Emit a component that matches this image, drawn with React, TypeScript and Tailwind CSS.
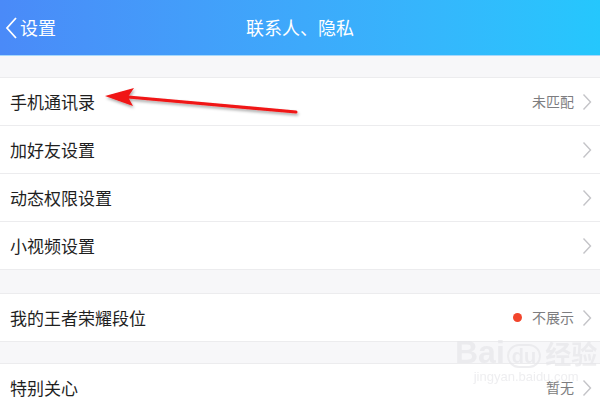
const font = { fontFamily: '"Noto Sans CJK SC", "Noto Sans", sans-serif' };

function Chevron() {
  return (
    <svg width="10" height="18" viewBox="0 0 10 18" className="ml-[8px] shrink-0">
      <path d="M1.5 1.5 L8.5 9 L1.5 16.5" fill="none" stroke="#c4c4c8" strokeWidth="1.4" />
    </svg>
  );
}

function Row({ label, value, dot }: { label: string; value?: string; dot?: boolean }) {
  return (
    <div className="flex h-[48px] items-center border-b border-[#ececee] bg-white pl-[10px] pr-[8px]">
      <span className="flex-1 text-[17px] text-[#1f1f1f]">{label}</span>
      {dot && <span className="mr-[10px] h-[9px] w-[9px] rounded-full bg-[#f2452c]" />}
      {value && <span className="text-[14px] text-[#7d7d80]">{value}</span>}
      <Chevron />
    </div>
  );
}

function Gap({ h }: { h: string }) {
  return <div className={`${h} border-b border-[#ececee] bg-[#f7f7f9]`} />;
}

export default function App() {
  return (
    <div className="relative h-[400px] w-[600px] overflow-hidden bg-[#f7f7f9]" style={font}>
      <div className="flex h-[56px] items-center border-b border-[#a6d8fb] bg-gradient-to-r from-[#4a8af8] to-[#25c7fd] text-white">
        <div className="flex w-[120px] items-center pl-[4px]">
          <svg width="14" height="24" viewBox="0 0 14 24">
            <path d="M12 2 L3 12 L12 22" fill="none" stroke="white" strokeWidth="1.8" />
          </svg>
          <span className="ml-[2px] text-[18px]">设置</span>
        </div>
        <div className="flex-1 text-center text-[18px]">联系人、隐私</div>
        <div className="w-[120px]" />
      </div>
      <div className="h-[22px] border-b border-[#ececee] bg-[#f7f7f9]" />
      <Row label="手机通讯录" value="未匹配" />
      <Row label="加好友设置" />
      <Row label="动态权限设置" />
      <Row label="小视频设置" />
      <Gap h="h-[24px]" />
      <Row label="我的王者荣耀段位" value="不展示" dot />
      <Gap h="h-[22px]" />
      <Row label="特别关心" value="暂无" />

      <svg className="absolute left-0 top-0" width="600" height="400" viewBox="0 0 600 400">
        <defs>
          <filter id="sh" x="-10%" y="-50%" width="120%" height="200%">
            <feDropShadow dx="1" dy="2" stdDeviation="1.5" floodColor="#000" floodOpacity="0.35" />
          </filter>
        </defs>
        <g filter="url(#sh)">
          <path d="M296 112 L128 97" stroke="#f01414" strokeWidth="3" strokeLinecap="round" />
          <path d="M105 96 L134 88 L128 97 L133 106 Z" fill="#f01414" />
        </g>
      </svg>

      <div className="pointer-events-none absolute left-[455px] top-[336px] flex flex-col items-center text-[#e7e7ea]" style={{ fontFamily: '"Liberation Sans", "Noto Sans CJK SC", sans-serif' }}>
        <div className="flex items-end gap-[2px]">
          <span className="text-[32px] font-bold leading-none opacity-70">Bai</span>
          <span className="rounded-full border-2 border-[#e7e7ea] px-[3px] text-[20px] font-bold leading-none opacity-70">du</span>
          <span className="ml-[2px] text-[26px] font-bold leading-none opacity-70">经验</span>
        </div>
        <span className="mt-[2px] text-[13px] leading-none opacity-70">jingyan.baidu.com</span>
      </div>
    </div>
  );
}
